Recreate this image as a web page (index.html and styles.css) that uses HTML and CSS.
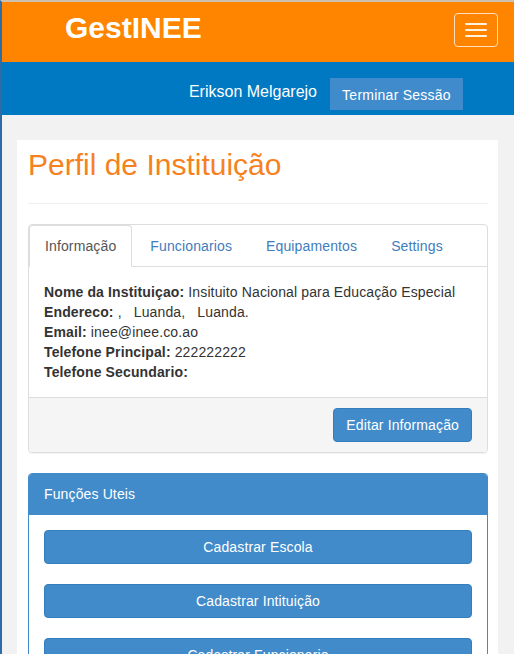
FILE: index.html
```html
<!DOCTYPE html>
<html lang="pt">
<head>
<meta charset="utf-8">
<title>GestINEE</title>
<link rel="stylesheet" href="styles.css">
</head>
<body>
<div class="page">
  <header class="topbar">
    <div class="brand">GestINEE</div>
    <button class="toggle" type="button" aria-label="Menu">
      <span class="bar"></span><span class="bar"></span><span class="bar"></span>
    </button>
  </header>
  <div class="userbar">
    <span class="username">Erikson Melgarejo</span>
    <button class="logout" type="button">Terminar Sessão</button>
  </div>
  <main class="card">
    <h1 class="title">Perfil de Instituição</h1>
    <hr class="rule">
    <section class="panel">
      <ul class="tabs">
        <li class="tab active">Informação</li>
        <li class="tab">Funcionarios</li>
        <li class="tab">Equipamentos</li>
        <li class="tab">Settings</li>
      </ul>
      <div class="info">
        <div><b>Nome da Instituiçao:</b> Insituito Nacional para Educação Especial</div>
        <div><b>Endereco:</b> ,&nbsp;&nbsp; Luanda,&nbsp;&nbsp; Luanda.</div>
        <div><b>Email:</b> inee@inee.co.ao</div>
        <div><b>Telefone Principal:</b> 222222222</div>
        <div><b>Telefone Secundario:</b></div>
      </div>
      <div class="panel-footer">
        <button class="btn" type="button">Editar Informação</button>
      </div>
    </section>
    <section class="panel panel-primary">
      <div class="panel-heading">Funções Uteis</div>
      <div class="panel-body">
        <button class="btn btn-block" type="button">Cadastrar Escola</button>
        <button class="btn btn-block" type="button">Cadastrar Intituição</button>
        <button class="btn btn-block" type="button">Cadastrar Funcionario</button>
      </div>
    </section>
  </main>
</div>
</body>
</html>
```
FILE: styles.css
```css
html, body {
  margin: 0;
  padding: 0;
}
body {
  background: #f2f2f2;
  font-family: "Liberation Sans", Arial, sans-serif;
  font-size: 14px;
  line-height: 20px;
  letter-spacing: 0.13px;
  color: #333;
  overflow: hidden;
}
.page {
  border-top: 2px solid #cdc1b0;
  border-left: 2px solid #2f6ca6;
  min-height: 652px;
  box-sizing: border-box;
}
.topbar {
  background: #ff8400;
  height: 60px;
  display: flex;
  align-items: center;
  justify-content: space-between;
  padding-left: 63px;
  padding-right: 16px;
}
.brand {
  color: #fff;
  font-weight: bold;
  font-size: 30px;
  line-height: 34px;
  letter-spacing: 0;
  margin-top: -8px;
}
.toggle {
  width: 44px;
  height: 34px;
  margin-top: -5px;
  border: 1px solid #ffe0bf;
  border-radius: 4px;
  background: transparent;
  padding: 0;
  display: flex;
  flex-direction: column;
  align-items: center;
  justify-content: center;
  gap: 4px;
}
.bar {
  display: block;
  width: 22px;
  height: 2px;
  background: #fff3e0;
  border-radius: 1px;
}
.userbar {
  background: #0079c2;
  height: 53px;
  box-sizing: border-box;
  display: flex;
  align-items: flex-start;
  justify-content: flex-end;
  padding: 16px 51px 0 0;
  gap: 13px;
}
.username {
  color: #fff;
  font-size: 16px;
  letter-spacing: 0;
  line-height: 20px;
  margin-top: 4px;
}
.logout {
  background: #3f8bcc;
  color: #fff;
  border: 0;
  font-family: inherit;
  font-size: 14px;
  letter-spacing: 0.25px;
  height: 32px;
  padding: 2px 12px 0;
  width: 133px;
}
.card {
  background: #fff;
  margin: 25px 0 0 15px;
  width: 481px;
  box-sizing: border-box;
  padding: 8px 10px 0 11px;
  min-height: 520px;
}
.title {
  margin: 0;
  font-size: 30px;
  line-height: 33px;
  font-weight: normal;
  letter-spacing: 0;
  color: #f5821f;
}
.rule {
  border: 0;
  border-top: 1px solid #eee;
  margin: 22px 0 20px;
}
.panel {
  border: 1px solid #ddd;
  border-radius: 4px;
  margin-bottom: 20px;
  box-shadow: 0 1px 1px rgba(0,0,0,0.05);
}
.tabs {
  list-style: none;
  margin: 0;
  padding: 0;
  display: flex;
  border-bottom: 1px solid #ddd;
  height: 41px;
}
.tab {
  padding: 10px 15px;
  margin-right: 2px;
  margin-bottom: -1px;
  border: 1px solid transparent;
  border-radius: 4px 4px 0 0;
  color: #3f7dbd;
  line-height: 20px;
}
.tab.active {
  color: #555;
  background: #fff;
  border-color: #ddd #ddd transparent;
}
.info {
  padding: 15px;
}
.info b {
  font-weight: bold;
}
.panel-footer {
  background: #f5f5f5;
  border-top: 1px solid #ddd;
  padding: 10px 15px;
  display: flex;
  justify-content: flex-end;
  border-radius: 0 0 3px 3px;
}
.btn {
  background: #428bca;
  color: #fff;
  border: 1px solid #357ebd;
  border-radius: 4px;
  font-family: inherit;
  font-size: 14px;
  letter-spacing: 0.13px;
  line-height: 20px;
  padding: 6px 12px;
}
.panel-primary {
  border-color: #428bca;
}
.panel-heading {
  background: #428bca;
  color: #fff;
  padding: 10px 15px 11px;
  border-radius: 3px 3px 0 0;
}
.panel-body {
  padding: 15px;
  display: flex;
  flex-direction: column;
  gap: 20px;
}
.btn-block {
  width: 100%;
  text-align: center;
}
```
